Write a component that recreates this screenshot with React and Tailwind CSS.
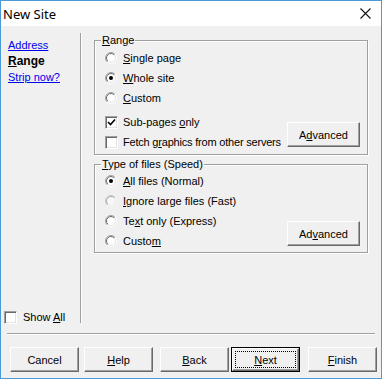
import React from "react";

function Radio({ checked, faint }) {
  return (
    <svg width="12" height="12" viewBox="0 0 12 12" className="shrink-0">
      <defs>
        <linearGradient id="rgOuter" x1="0" y1="0" x2="1" y2="1">
          <stop offset="0.5" stopColor="#a0a0a0" />
          <stop offset="0.5" stopColor="#ffffff" />
        </linearGradient>
        <linearGradient id="rgInner" x1="0" y1="0" x2="1" y2="1">
          <stop offset="0.5" stopColor="#696969" />
          <stop offset="0.5" stopColor="#e3e3e3" />
        </linearGradient>
      </defs>
      <circle cx="6" cy="6" r="5.5" fill="none" stroke="url(#rgOuter)" strokeWidth="1" opacity={faint ? 0.5 : 1} />
      <circle cx="6" cy="6" r="4.5" fill="#ffffff" stroke="url(#rgInner)" strokeWidth="1" opacity={faint ? 0.5 : 1} />
      {checked && <circle cx="6" cy="6" r="2" fill="#000000" />}
    </svg>
  );
}

function Check({ checked }) {
  return (
    <div className="w-[13px] h-[13px] shrink-0 bg-white border border-t-[#a0a0a0] border-l-[#a0a0a0] border-b-white border-r-white shadow-[inset_1px_1px_0_#696969,inset_-1px_-1px_0_#e3e3e3] flex items-center justify-center">
      {checked && (
        <svg width="9" height="9" viewBox="0 0 9 9">
          <path d="M1 4 L3.5 6.5 L8 1.5" fill="none" stroke="#000" strokeWidth="1.6" />
        </svg>
      )}
    </div>
  );
}

function U({ children }) {
  return <span className="underline underline-offset-[1px]">{children}</span>;
}

function Btn({ children, w = "w-[69px]", cls = "", isDefault }) {
  if (isDefault) {
    return (
      <div className={`${w} h-[25px] border border-black ${cls}`}>
        <div className="w-full h-full border border-t-white border-l-white border-b-[#696969] border-r-[#696969] shadow-[inset_-1px_-1px_0_#a0a0a0] bg-[#f0f0f0] p-[2px]">
          <div className="w-full h-full border border-dotted border-black flex items-center justify-center">
            {children}
          </div>
        </div>
      </div>
    );
  }
  return (
    <div
      className={`${w} h-[25px] border border-t-white border-l-white border-b-[#696969] border-r-[#696969] shadow-[inset_-1px_-1px_0_#a0a0a0] bg-[#f0f0f0] flex items-center justify-center ${cls}`}
    >
      {children}
    </div>
  );
}

function RadioRow({ checked, faint, children }) {
  return (
    <div className="flex items-center h-[20px] whitespace-nowrap">
      <Radio checked={checked} faint={faint} />
      <span className="ml-[6px]">{children}</span>
    </div>
  );
}

function CheckRow({ checked, children, tight }) {
  return (
    <div className="flex items-center h-[20px] whitespace-nowrap">
      <Check checked={checked} />
      <span className={tight ? "ml-[5px] tracking-[-0.2px]" : "ml-[5px]"}>{children}</span>
    </div>
  );
}

export default function App() {
  return (
    <div className='w-[382px] h-[379px] border border-[#4d9ad8] bg-[#f0f0f0] flex flex-col font-["Liberation_Sans",Arial,sans-serif] text-[11px] leading-[14px] text-black overflow-hidden'>
      {/* Title bar */}
      <div className="h-[25px] shrink-0 bg-white flex items-center justify-between pl-[2px] pr-[10px]">
        <span className='font-["Noto_Sans",sans-serif] text-[13px] leading-[18px] text-black'>New Site</span>
        <svg width="11" height="11" viewBox="0 0 11 11">
          <path d="M0.5 0.5 L10.5 10.5 M10.5 0.5 L0.5 10.5" stroke="#111" strokeWidth="1.1" />
        </svg>
      </div>

      {/* Upper area */}
      <div className="flex h-[307px] shrink-0">
        {/* Left nav */}
        <div className="w-[79px] shrink-0 flex flex-col">
          <div className="pl-[7px] pt-[11px] flex flex-col leading-[16px] text-[11px]">
            <span className="text-[#0000ee] underline underline-offset-[1px]">Address</span>
            <span className="font-bold text-[12px]">
              <U>R</U>ange
            </span>
            <span className="text-[#0000ee] underline underline-offset-[1px]">Strip now?</span>
          </div>
          <div className="mt-auto mb-[9px] pl-[3px] flex items-center h-[14px]">
            <Check />
            <span className="ml-[6px]">
              Show <U>A</U>ll
            </span>
          </div>
        </div>
        {/* vertical separator */}
        <div className="w-[2px] shrink-0 mt-[7px] mb-[10px] border-l border-l-[#a0a0a0] border-r border-r-white" />

        {/* Right panel */}
        <div className="ml-[12px] w-[274px] flex flex-col">
          <fieldset className="mt-[7px] border border-[#a0a0a0] shadow-[inset_1px_1px_0_#fff,1px_1px_0_#fff] p-0 m-0 h-[122px]">
            <legend className="ml-[6px] px-[1px] bg-[#f0f0f0] leading-[14px]">
              <U>R</U>ange
            </legend>
            <div className="pl-[10px] pt-[1px] flex flex-col">
              <RadioRow>
                <U>S</U>ingle page
              </RadioRow>
              <RadioRow checked>
                <U>W</U>hole site
              </RadioRow>
              <RadioRow>
                <U>C</U>ustom
              </RadioRow>
              <div className="mt-[4px] flex justify-between items-end">
                <div className="flex flex-col shrink-0">
                  <CheckRow checked>
                    Sub-pages <U>o</U>nly
                  </CheckRow>
                  <CheckRow tight>
                    Fetch g<U>r</U>aphics from other servers
                  </CheckRow>
                </div>
                <Btn w="w-[73px]" cls="h-[24px] mb-[5px] mr-[7px] shrink-0">
                  <span>
                    A<U>d</U>vanced
                  </span>
                </Btn>
              </div>
            </div>
          </fieldset>

          <fieldset className="mt-[2px] border border-[#a0a0a0] shadow-[inset_1px_1px_0_#fff,1px_1px_0_#fff] p-0 m-0 h-[96px]">
            <legend className="ml-[6px] px-[1px] bg-[#f0f0f0] leading-[14px]">
              <U>T</U>ype of files (Speed)
            </legend>
            <div className="pl-[10px] flex justify-between items-end">
              <div className="flex flex-col">
                <RadioRow checked>
                  <U>A</U>ll files (Normal)
                </RadioRow>
                <RadioRow faint>
                  <U>I</U>gnore large files (Fast)
                </RadioRow>
                <RadioRow>
                  Te<U>x</U>t only (Express)
                </RadioRow>
                <RadioRow>
                  Custo<U>m</U>
                </RadioRow>
              </div>
              <Btn w="w-[73px]" cls="h-[24px] mb-[5px] mr-[7px] shrink-0">
                <span>
                  Ad<U>v</U>anced
                </span>
              </Btn>
            </div>
          </fieldset>
        </div>
      </div>

      {/* horizontal separator */}
      <div className="h-[2px] shrink-0 mx-[6px] border-t border-t-[#a0a0a0] border-b border-b-white" />

      {/* Buttons */}
      <div className="flex mt-[12px] pl-[9px]">
        <Btn>Cancel</Btn>
        <Btn cls="ml-[5px]">
          <span>
            <U>H</U>elp
          </span>
        </Btn>
        <Btn cls="ml-[7px]">
          <span>
            <U>B</U>ack
          </span>
        </Btn>
        <Btn cls="ml-[2px]" isDefault>
          <span>
            <U>N</U>ext
          </span>
        </Btn>
        <Btn cls="ml-[8px]">
          <span>
            <U>F</U>inish
          </span>
        </Btn>
      </div>
    </div>
  );
}
